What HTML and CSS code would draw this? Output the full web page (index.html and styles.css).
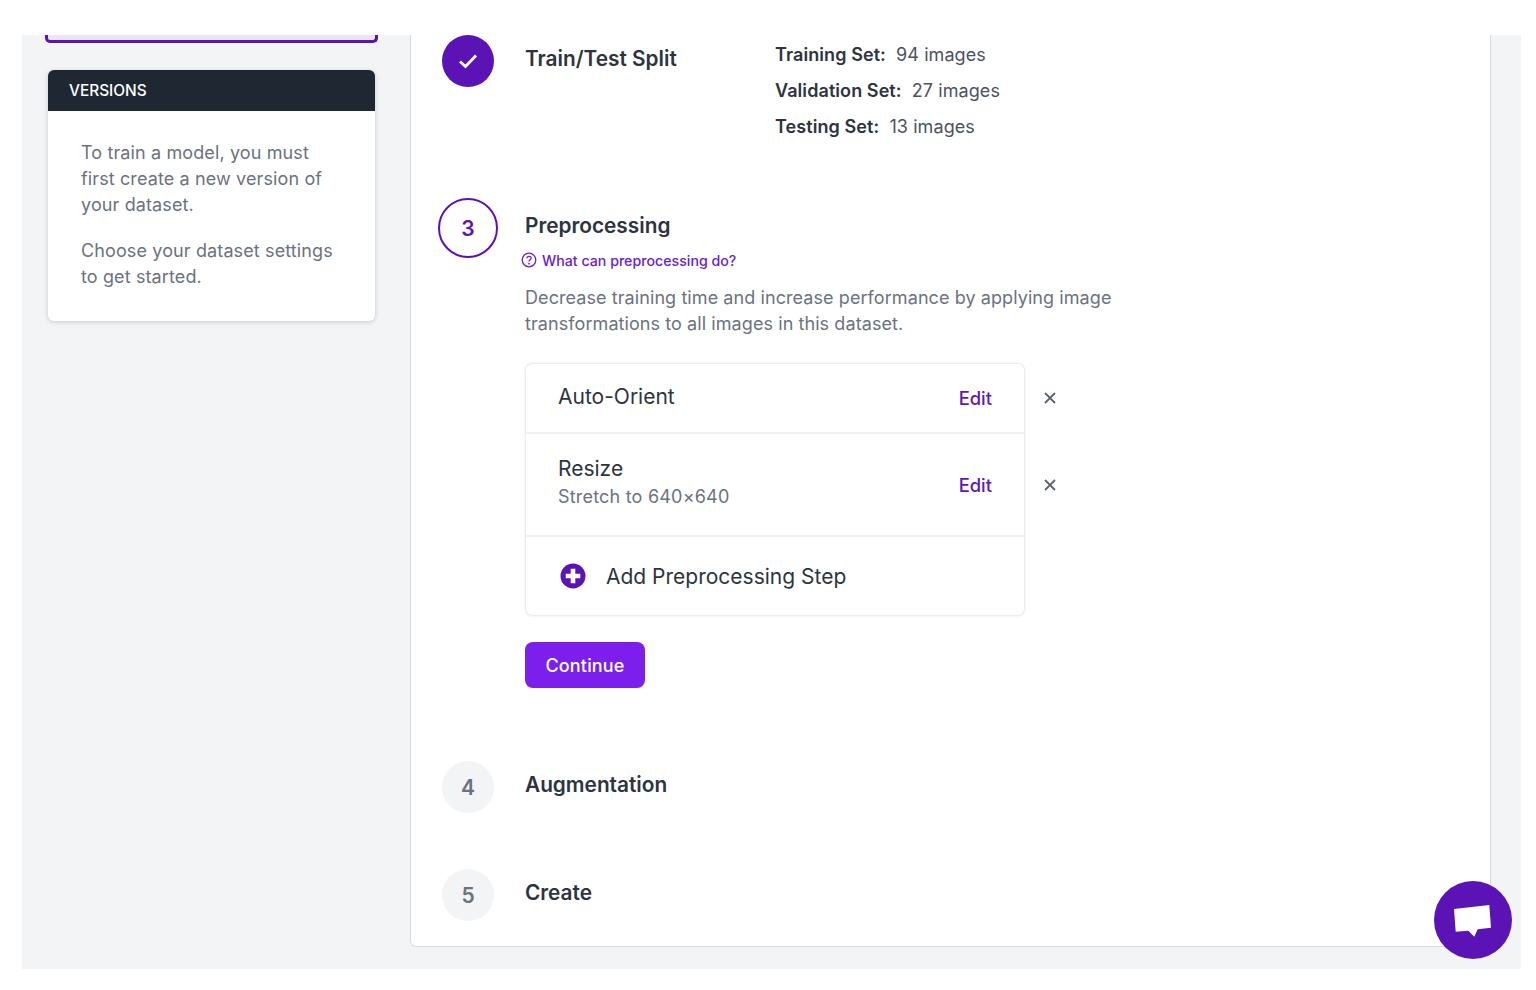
FILE: index.html
```html
<!DOCTYPE html>
<html lang="en">
<head>
    <meta charset="UTF-8">
    <meta name="viewport" content="width=device-width, initial-scale=1.0">
    <title>Generate Version</title>
    <link rel="stylesheet" href="styles.css">
</head>
<body>
    <div class="frame">
        <aside class="sidebar">
            <div class="selected-card"></div>
            <div class="versions-card">
                <div class="versions-card__head">VERSIONS</div>
                <div class="versions-card__body">
                    <p>To train a model, you must first create a new version of your dataset.</p>
                    <p>Choose your dataset settings to get started.</p>
                </div>
            </div>
        </aside>

        <main class="panel">
            <section class="step step--split">
                <div class="step__marker">
                    <div class="circle circle--done">
                        <svg width="20" height="16" viewBox="0 0 20 16"><path d="M2 8.5 L7.5 13.5 L18 2.5" fill="none" stroke="#fff" stroke-width="2.8"/></svg>
                    </div>
                </div>
                <h2 class="step__title step__title--split">Train/Test Split</h2>
                <div class="split-stats">
                    <p><strong>Training Set:</strong> 94 images</p>
                    <p><strong>Validation Set:</strong> 27 images</p>
                    <p><strong>Testing Set:</strong> 13 images</p>
                </div>
            </section>

            <section class="step step--active">
                <div class="step__marker">
                    <div class="circle circle--active">3</div>
                </div>
                <div class="step__content">
                    <h2 class="step__title">Preprocessing</h2>
                    <a class="help-link" href="#">
                        <svg width="16" height="16" viewBox="0 0 16 16"><circle cx="8" cy="8" r="6.8" fill="none" stroke="#6b21c8" stroke-width="1.3"/><path d="M5.9 6.3 C5.9 3.7 10.2 3.7 10.2 6.2 C10.2 7.8 8 7.8 8 9.6" fill="none" stroke="#6b21c8" stroke-width="1.3"/><circle cx="8" cy="11.7" r="0.9" fill="#6b21c8"/></svg>
                        What can preprocessing do?
                    </a>
                    <p class="step__desc">Decrease training time and increase performance by applying image transformations to all images in this dataset.</p>

                    <div class="options">
                        <div class="options__card">
                            <div class="option option--short">
                                <div class="option__name">Auto-Orient</div>
                                <a class="option__edit" href="#">Edit</a>
                                <svg class="option__remove" width="12" height="12" viewBox="0 0 12 12"><path d="M1 1 L11 11 M11 1 L1 11" stroke="#5b6270" stroke-width="1.8"/></svg>
                            </div>
                            <div class="option option--tall">
                                <div>
                                    <div class="option__name">Resize</div>
                                    <div class="option__detail">Stretch to 640×640</div>
                                </div>
                                <a class="option__edit" href="#">Edit</a>
                                <svg class="option__remove" width="12" height="12" viewBox="0 0 12 12"><path d="M1 1 L11 11 M11 1 L1 11" stroke="#5b6270" stroke-width="1.8"/></svg>
                            </div>
                            <div class="option-add">
                                <svg width="26" height="26" viewBox="0 0 26 26"><circle cx="13" cy="13" r="12.5" fill="#5b13b5"/><path d="M13 5.7 V20.3 M5.7 13 H20.3" stroke="#fff" stroke-width="4.6"/></svg>
                                <span>Add Preprocessing Step</span>
                            </div>
                        </div>
                    </div>

                    <button class="continue-btn">Continue</button>
                </div>
            </section>

            <section class="step step--four">
                <div class="step__marker">
                    <div class="circle">4</div>
                </div>
                <h2 class="step__title">Augmentation</h2>
            </section>

            <section class="step step--five">
                <div class="step__marker">
                    <div class="circle">5</div>
                </div>
                <h2 class="step__title">Create</h2>
            </section>
        </main>

        <button class="chat-btn">
            <svg width="78" height="78" viewBox="0 0 78 78"><path d="M20 28 L55.3 24 L57 46.7 L43.7 48.3 L40.3 55.7 L34.3 49.7 L21.7 50.7 Z" fill="#fff"/></svg>
        </button>
    </div>
</body>
</html>
```

FILE: styles.css
```css
* {
    margin: 0;
    padding: 0;
    box-sizing: border-box;
    font-family: Inter, 'Liberation Sans', sans-serif;
}

body {
    background: #ffffff;
    padding: 35px 15px 21px 22px;
    height: 990px;
    overflow: hidden;
}

.frame {
    position: relative;
    display: flex;
    align-items: flex-start;
    height: 934px;
    padding-right: 30px;
    background: #f3f4f6;
}

.sidebar {
    width: 388px;
    flex-shrink: 0;
    padding-left: 23px;
}

.selected-card {
    width: 333px;
    height: 8px;
    background: #ede3fb;
    border: 3px solid #5b13b5;
    border-top: none;
    border-radius: 0 0 5px 5px;
}

.versions-card {
    width: 327px;
    margin: 27px 0 0 3px;
    border-radius: 6px;
    background: #ffffff;
    box-shadow: 0 1px 5px rgba(0, 0, 0, 0.18);
    overflow: hidden;
}

.versions-card__head {
    height: 41px;
    padding-left: 21px;
    background: #1f2733;
    color: #ffffff;
    font-size: 15.4px;
    font-weight: 500;
    line-height: 41px;
}

.versions-card__body {
    height: 210px;
    padding: 29px 30px 0 33px;
    color: #6b7280;
    font-size: 18px;
    line-height: 26px;
    letter-spacing: 0.12px;
}

.versions-card__body p + p {
    margin-top: 20px;
}

.panel {
    flex: 1;
    height: 912px;
    background: #ffffff;
    border: 1px solid #d5d8dd;
    border-top: none;
    border-radius: 0 0 6px 6px;
}

.step {
    display: flex;
    align-items: flex-start;
}

.step__marker {
    width: 114px;
    flex-shrink: 0;
    display: flex;
    justify-content: center;
}

.circle {
    width: 52px;
    height: 52px;
    border-radius: 50%;
    display: flex;
    align-items: center;
    justify-content: center;
    background: #f3f4f6;
    color: #6b7280;
    font-size: 21px;
    font-weight: 600;
}

.circle--done {
    background: #5b13b5;
}

.circle--active {
    width: 60px;
    height: 60px;
    background: #ffffff;
    border: 2px solid #5b13b5;
    color: #5b13b5;
}

.step__title {
    color: #2d3440;
    font-size: 20.8px;
    font-weight: 600;
    line-height: 28px;
}

.step--split {
    height: 163px;
}

.step__title--split {
    width: 250px;
    margin-top: 10px;
}

.split-stats {
    margin-top: 2px;
    color: #4b5260;
    font-size: 18px;
    line-height: 36px;
    letter-spacing: 0.08px;
}

.split-stats strong {
    color: #2d3440;
    font-weight: 600;
    margin-right: 5px;
}

.step--active {
    height: 563px;
}

.step--active .step__title {
    margin-top: 14px;
}

.step__content {
    width: 620px;
}

.help-link {
    display: flex;
    align-items: center;
    gap: 5px;
    margin: 10px 0 0 -4px;
    height: 20px;
    color: #6b21c8;
    font-size: 14.2px;
    font-weight: 500;
    text-decoration: none;
}

.step__desc {
    margin-top: 15px;
    color: #6b7280;
    font-size: 18px;
    line-height: 26px;
    letter-spacing: 0.08px;
}

.options {
    margin: 27px 0 0 1px;
}

.options__card {
    width: 498px;
    background: #ffffff;
    border-radius: 6px;
    box-shadow: 0 0 3px rgba(0, 0, 0, 0.22);
}

.option {
    position: relative;
    display: flex;
    align-items: center;
    justify-content: space-between;
    padding: 0 32px;
    border-bottom: 2px solid #eff0f2;
}

.option--short {
    height: 70px;
}

.option--tall {
    height: 103px;
    padding-bottom: 4px;
}

.option--short .option__name {
    margin-top: -3px;
}

.option__name {
    color: #2d3440;
    font-size: 21px;
    font-weight: 400;
    line-height: 28px;
}

.option__detail {
    color: #6b7280;
    font-size: 18px;
    line-height: 28px;
    letter-spacing: 0.2px;
}

.option__edit {
    color: #5f17b5;
    font-size: 18.4px;
    font-weight: 500;
    text-decoration: none;
}

.option--tall .option__edit {
    margin-top: 4px;
}

.option__remove {
    position: absolute;
    right: -32px;
    top: 50%;
    margin-top: -6px;
}

.option-add {
    display: flex;
    align-items: center;
    gap: 20px;
    height: 78px;
    padding: 0 0 0 34px;
    color: #2d3440;
    font-size: 21px;
}

.continue-btn {
    display: block;
    width: 120px;
    height: 46px;
    margin-top: 27px;
    background: #7c1fec;
    border: none;
    border-radius: 8px;
    color: #ffffff;
    font-size: 18px;
    font-weight: 500;
    letter-spacing: 0.15px;
}

.step--four {
    height: 108px;
}

.step--five {
    height: 78px;
}

.step--four .step__title,
.step--five .step__title {
    margin-top: 10px;
}

.chat-btn {
    position: absolute;
    right: 9px;
    bottom: 10px;
    width: 78px;
    height: 78px;
    border: none;
    border-radius: 50%;
    background: #5b13b5;
}
```
